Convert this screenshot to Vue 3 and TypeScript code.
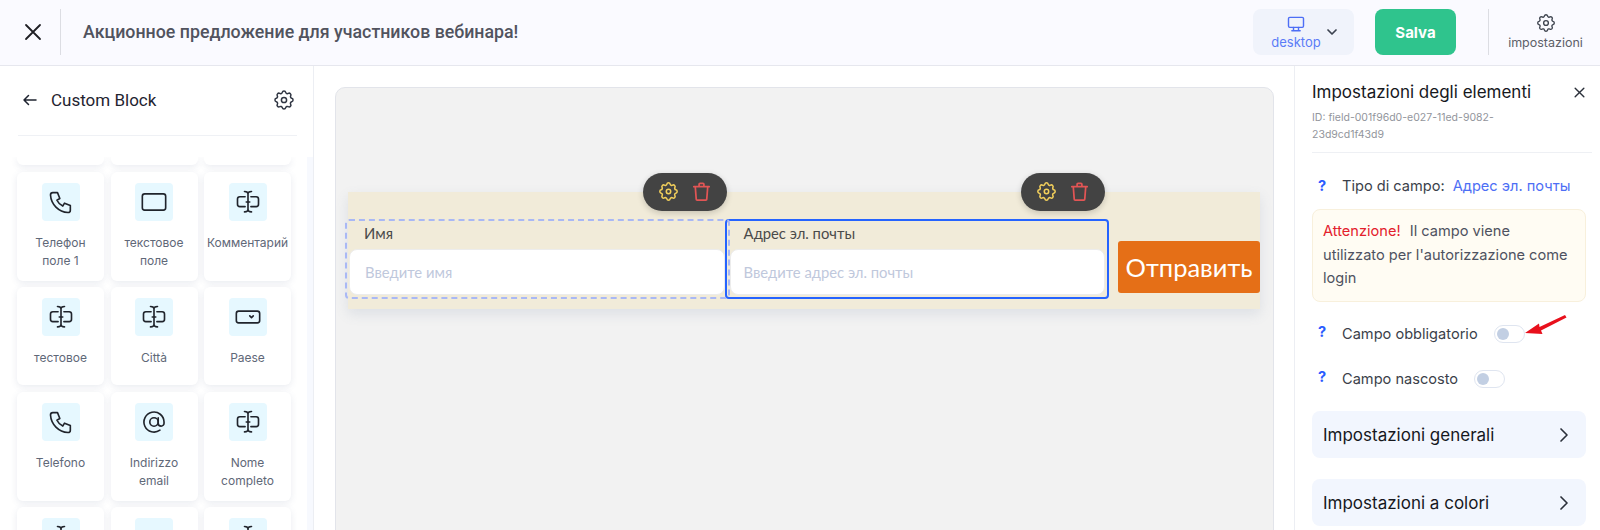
<script setup lang="ts">
type IconName = 'phone' | 'rect' | 'cursor' | 'select' | 'at' | 'none';

interface FieldCard {
  label: string;
  icon: IconName;
}

const stubs = [1, 2, 3];

const cards: FieldCard[] = [
  { label: 'Телефон поле 1', icon: 'phone' },
  { label: 'текстовое поле', icon: 'rect' },
  { label: 'Комментарий', icon: 'cursor' },
  { label: 'тестовое', icon: 'cursor' },
  { label: 'Città', icon: 'cursor' },
  { label: 'Paese', icon: 'select' },
  { label: 'Telefono', icon: 'phone' },
  { label: 'Indirizzo email', icon: 'at' },
  { label: 'Nome completo', icon: 'cursor' },
  { label: '', icon: 'cursor' },
  { label: '', icon: 'none' },
  { label: '', icon: 'cursor' },
];

const gearPath =
  'M10.3 4.3c.4-1.8 3-1.8 3.4 0a1.7 1.7 0 0 0 2.6 1.1c1.5-.9 3.3.8 2.4 2.4a1.7 1.7 0 0 0 1 2.5c1.8.4 1.8 3 0 3.4a1.7 1.7 0 0 0-1 2.6c.9 1.5-.9 3.3-2.4 2.4a1.7 1.7 0 0 0-2.6 1c-.4 1.8-3 1.8-3.4 0a1.7 1.7 0 0 0-2.6-1c-1.5.9-3.3-.9-2.4-2.4a1.7 1.7 0 0 0-1-2.6c-1.8-.4-1.8-3 0-3.4a1.7 1.7 0 0 0 1-2.5c-.9-1.6.9-3.3 2.4-2.4a1.7 1.7 0 0 0 2.6-1.1z';
const phonePath =
  'M5 4h4l2 5-2.5 1.5a11 11 0 0 0 5 5L15 13l5 2v4a2 2 0 0 1-2 2A16 16 0 0 1 3 6a2 2 0 0 1 2-2';
const trashPath = 'M4 7h16M5.500 7l1 13a1 1 0 0 0 1 1h9a1 1 0 0 0 1-1l1-13M9.500 7V4.500a1 1 0 0 1 1-1h3a1 1 0 0 1 1 1V7';
</script>

<template>
  <div class="page">
    <header class="topbar">
      <button class="close">
        <svg width="24" height="24" viewBox="0 0 24 24" fill="none" stroke="#1f1f24" stroke-width="1.8" stroke-linecap="round">
          <path d="M5 5l14 14M19 5L5 19" />
        </svg>
      </button>
      <h1 class="page-title">Акционное предложение для участников вебинара!</h1>
      <div class="device">
        <div class="device-main">
          <svg width="20" height="20" viewBox="0 0 24 24" fill="none" stroke="#4d6ef5" stroke-width="1.7" stroke-linecap="round" stroke-linejoin="round">
            <rect x="3" y="4" width="18" height="12" rx="1.5" />
            <path d="M7 20h10M9 16v4M15 16v4" />
          </svg>
          <span>desktop</span>
        </div>
        <svg class="device-chevron" width="16" height="16" viewBox="0 0 24 24" fill="none" stroke="#3c4350" stroke-width="2.6" stroke-linecap="round" stroke-linejoin="round">
          <path d="M6 9l6 6 6-6" />
        </svg>
      </div>
      <button class="save">Salva</button>
      <div class="settings">
        <svg width="22" height="22" viewBox="0 0 24 24" fill="none" stroke="#3f4550" stroke-width="1.5" stroke-linejoin="round">
          <path :d="gearPath" />
          <circle cx="12" cy="12" r="2.6" />
        </svg>
        <span>impostazioni</span>
      </div>
    </header>

    <div class="body">
      <aside class="left">
        <div class="left-head">
          <svg width="18" height="18" viewBox="0 0 24 24" fill="none" stroke="#1f2430" stroke-width="2" stroke-linecap="round" stroke-linejoin="round">
            <path d="M20 12H4M10 6l-6 6 6 6" />
          </svg>
          <span class="left-title">Custom Block</span>
          <svg class="left-gear" width="24" height="24" viewBox="0 0 24 24" fill="none" stroke="#2f3542" stroke-width="1.5" stroke-linejoin="round">
            <path :d="gearPath" />
            <circle cx="12" cy="12" r="2.6" />
          </svg>
        </div>
        <div class="list-wrap">
          <div class="list">
            <div v-for="s in stubs" :key="s" class="card stub"></div>
            <div v-for="(card, i) in cards" :key="i" class="card">
              <div class="tile">
                <svg v-if="card.icon !== 'none'" width="28" height="28" viewBox="0 0 24 24" fill="none" stroke="#20242c" stroke-width="1.4" stroke-linecap="round" stroke-linejoin="round">
                  <path v-if="card.icon === 'phone'" :d="phonePath" />
                  <rect v-else-if="card.icon === 'rect'" x="2" y="5" width="20" height="14" rx="2" />
                  <template v-else-if="card.icon === 'cursor'">
                    <path d="M9.500 7.500H5a2 2 0 0 0-2 2v4.500a2 2 0 0 0 2 2h4.500M14.500 7.500H19a2 2 0 0 1 2 2v4.500a2 2 0 0 1-2 2h-4.500" />
                    <path d="M12 5v13.500M9 3c1.500 0 3 .6 3 2 0-1.400 1.500-2 3-2M9 20.500c1.500 0 3-.6 3-2 0 1.400 1.500 2 3 2M10.500 12h3" />
                  </template>
                  <template v-else-if="card.icon === 'select'">
                    <rect x="2" y="7" width="20" height="10" rx="2" />
                    <path d="M13.500 11l1.500 1.500 1.500-1.500" />
                  </template>
                  <template v-else-if="card.icon === 'at'">
                    <circle cx="12" cy="12" r="3.600" />
                    <path d="M15.600 8.500v4.500a2.500 2.500 0 0 0 5 0V12a8.600 8.600 0 1 0-3.500 7" />
                  </template>
                </svg>
              </div>
              <div class="card-label">{{ card.label }}</div>
            </div>
          </div>
          <div class="scroll-track"></div>
        </div>
      </aside>

      <main class="center">
        <div class="canvas">
          <form class="form-block" @submit.prevent>
            <div class="field first">
              <div class="dashed"></div>
              <div class="pill">
                <svg width="23" height="23" viewBox="0 0 24 24" fill="none" stroke="#f2cf5b" stroke-width="1.6" stroke-linejoin="round">
                  <path :d="gearPath" />
                  <circle cx="12" cy="12" r="2.300" />
                </svg>
                <svg width="23" height="23" viewBox="0 0 24 24" fill="none" stroke="#e25555" stroke-width="1.8" stroke-linecap="round" stroke-linejoin="round">
                  <path :d="trashPath" />
                </svg>
              </div>
              <label>Имя</label>
              <div class="input">Введите имя</div>
            </div>
            <div class="field active">
              <div class="pill">
                <svg width="23" height="23" viewBox="0 0 24 24" fill="none" stroke="#f2cf5b" stroke-width="1.6" stroke-linejoin="round">
                  <path :d="gearPath" />
                  <circle cx="12" cy="12" r="2.300" />
                </svg>
                <svg width="23" height="23" viewBox="0 0 24 24" fill="none" stroke="#e25555" stroke-width="1.8" stroke-linecap="round" stroke-linejoin="round">
                  <path :d="trashPath" />
                </svg>
              </div>
              <label>Адрес эл. почты</label>
              <div class="input">Введите адрес эл. почты</div>
            </div>
            <button class="submit">Отправить</button>
          </form>
        </div>
      </main>

      <aside class="right">
        <div class="right-head">
          <div class="right-title">
            <span>Impostazioni degli elementi</span>
            <svg width="13" height="13" viewBox="0 0 24 24" fill="none" stroke="#2b303a" stroke-width="2.600" stroke-linecap="round">
              <path d="M4 4l16 16M20 4L4 20" />
            </svg>
          </div>
          <div class="right-id">ID: field-001f96d0-e027-11ed-9082-<br />23d9cd1f43d9</div>
        </div>
        <div class="row type-row">
          <span class="hint">?</span>
          <span class="row-label">Tipo di campo:</span>
          <span class="type-value">Адрес эл. почты</span>
        </div>
        <div class="warning">
          <span class="warn-word">Attenzione!</span> Il campo viene<br />utilizzato per l'autorizzazione come<br />login
        </div>
        <div class="row toggle-row required">
          <span class="hint">?</span>
          <span class="row-label">Campo obbligatorio</span>
          <span class="toggle"><i></i></span>
          <svg class="arrow" width="44" height="24" viewBox="0 0 44 24" fill="#e8101c">
            <path d="M1 19L15 9.500l.5 3.500L41 1l1.500 2.500L17 16.500l1.500 3.500z" />
          </svg>
        </div>
        <div class="row toggle-row hidden-row">
          <span class="hint">?</span>
          <span class="row-label">Campo nascosto</span>
          <span class="toggle"><i></i></span>
        </div>
        <div class="accordion">
          <span>Impostazioni generali</span>
          <svg width="18" height="18" viewBox="0 0 24 24" fill="none" stroke="#2b303a" stroke-width="2.200" stroke-linecap="round" stroke-linejoin="round">
            <path d="M8 4l8 8-8 8" />
          </svg>
        </div>
        <div class="accordion second">
          <span>Impostazioni a colori</span>
          <svg width="18" height="18" viewBox="0 0 24 24" fill="none" stroke="#2b303a" stroke-width="2.200" stroke-linecap="round" stroke-linejoin="round">
            <path d="M8 4l8 8-8 8" />
          </svg>
        </div>
      </aside>
    </div>
  </div>
</template>

<style>
html,
body {
  margin: 0;
  overflow: hidden;
  background: #fff;
}
</style>

<style scoped>
.page {
  width: 1600px;
  height: 530px;
  overflow: hidden;
  font-family: Inter, 'Noto Sans', sans-serif;
  display: flex;
  flex-direction: column;
}

.topbar {
  height: 65px;
  box-sizing: content-box;
  flex: none;
  background: #fafaff;
  border-bottom: 1px solid #e6e7ee;
  display: flex;
  align-items: flex-start;
}

.topbar > * {
  margin-top: 9px;
}

.close {
  width: 61px;
  height: 46px;
  padding: 0 0 0 6px;
  background: none;
  border: 0;
  border-right: 1px solid #dcdde3;
  display: flex;
  align-items: center;
  justify-content: center;
}

.topbar > .page-title {
  margin: 22px 0 0 22px;
  flex: 1;
  font: 500 17.800px/20px Roboto, sans-serif;
  color: #51535e;
}

.device {
  width: 101px;
  height: 46px;
  background: #f0f3fb;
  border-radius: 8px;
  display: flex;
  align-items: center;
  box-sizing: border-box;
  padding-left: 19px;
}

.device-main {
  width: 48px;
  display: flex;
  flex-direction: column;
  align-items: center;
  font-size: 13px;
  line-height: 16px;
  color: #5b7cf7;
}

.device-chevron {
  margin-left: 4px;
}

.save {
  width: 81px;
  height: 46px;
  margin-left: 21px;
  border: 0;
  border-radius: 8px;
  background: #2fc48d;
  color: #fff;
  font: 700 15px Inter, sans-serif;
}

.settings {
  width: 112px;
  height: 46px;
  margin-left: 32px;
  box-sizing: border-box;
  border-left: 1px solid #dcdde3;
  display: flex;
  flex-direction: column;
  align-items: center;
  justify-content: center;
  padding-left: 2px;
  font-size: 12.500px;
  line-height: 18px;
  color: #5d6068;
}

.body {
  flex: 1;
  min-height: 0;
  display: flex;
}

.left {
  width: 314px;
  flex: none;
  box-sizing: border-box;
  border-right: 1px solid #eceef3;
  display: flex;
  flex-direction: column;
}

.left-head {
  box-sizing: content-box;
  height: 67px;
  padding: 0 1px 2px 3px;
  margin: 0 16px 0 18px;
  flex: none;
  display: flex;
  align-items: center;
  gap: 12px;
  border-bottom: 1px solid #eff1f5;
}

.left-title {
  font: 400 17px Roboto, sans-serif;
  color: #1f2430;
}

.left-gear {
  margin-left: auto;
}

.list-wrap {
  flex: 1;
  min-height: 0;
  margin-top: 21px;
  display: flex;
  overflow: hidden;
}

.list {
  width: 274px;
  margin-left: 17px;
  align-self: flex-start;
  display: grid;
  grid-template-columns: repeat(3, 87px);
  column-gap: 6.500px;
  row-gap: 6.500px;
  align-content: start;
}

.card {
  background: #fff;
  border-radius: 6px;
  box-shadow: 0 2px 7px rgba(70, 90, 130, 0.12);
  padding: 11px 3px 0;
  min-height: 98px;
  box-sizing: border-box;
  display: flex;
  flex-direction: column;
  align-items: center;
  text-align: center;
}

.card.stub {
  height: 8px;
  min-height: 0;
  padding: 0;
  border-radius: 0 0 6px 6px;
}

.tile {
  width: 38px;
  height: 38px;
  flex: none;
  border-radius: 4px;
  background: #e6f8ff;
  display: flex;
  align-items: center;
  justify-content: center;
}

.card-label {
  margin-top: 13px;
  min-height: 18px;
  padding-bottom: 10px;
  font-size: 12px;
  line-height: 18.500px;
  color: #5f6878;
}

.scroll-track {
  width: 6px;
  margin-left: 16px;
  align-self: stretch;
  background: #f7f9fe;
}

.center {
  flex: 1;
  min-width: 0;
  padding: 21px 20px 0 21px;
}

.canvas {
  height: 600px;
  box-sizing: border-box;
  background: #f2f2f2;
  border: 1px solid #e2e4ea;
  border-radius: 10px;
  padding: 104px 12px 0;
}

.form-block {
  width: 912px;
  height: 117px;
  box-sizing: border-box;
  padding-top: 27px;
  background: #f1ebd9;
  box-shadow: 0 5px 12px rgba(90, 110, 150, 0.14);
  display: flex;
  align-items: flex-start;
  font-family: Lato, 'Noto Sans', sans-serif;
}

.field {
  position: relative;
  box-sizing: border-box;
  height: 80px;
}

.field.first {
  width: 380px;
  margin-left: -3px;
  padding: 5px 0 0 4px;
}

.field.active {
  width: 384px;
  padding: 3px 2.500px 0 2.500px;
  border: 2px solid #2563ff;
  border-radius: 4px;
}

.dashed {
  position: absolute;
  left: 0;
  top: 0;
  width: 385px;
  height: 80px;
  box-sizing: border-box;
  border: 2px dashed #a9b8f5;
  border-radius: 4px;
  z-index: 2;
  pointer-events: none;
}

.pill {
  position: absolute;
  right: -1.500px;
  top: -46.500px;
  width: 84px;
  height: 38px;
  box-sizing: border-box;
  padding: 0 14px;
  border-radius: 19px;
  background: #434343;
  box-shadow: 0 2px 6px rgba(0, 0, 0, 0.18);
  display: flex;
  align-items: center;
  justify-content: space-between;
  z-index: 3;
}

.field.active .pill {
  right: 2px;
  top: -48.500px;
}

.field label {
  display: block;
  padding-left: 15px;
  font-size: 14.800px;
  line-height: 18px;
  height: 25px;
  color: #4a4a4a;
}

.field.active label {
  padding-left: 14px;
}

.input {
  height: 46px;
  box-sizing: border-box;
  padding-left: 15px;
  border: 1px solid #ececec;
  border-radius: 8px;
  background: #fff;
  font-size: 14.800px;
  line-height: 44px;
  color: #bfc8dc;
}

.field.active .input {
  padding-left: 13px;
}

.submit {
  width: 142px;
  height: 52px;
  margin: 22px 0 0 9px;
  padding: 0;
  border: 0;
  border-radius: 3px;
  background: #e56f17;
  color: #fff;
  font: 400 25.500px Lato, 'Noto Sans', sans-serif;
}

.right {
  width: 306px;
  flex: none;
  box-sizing: border-box;
  border-left: 1px solid #eceef3;
  padding: 0 14px 0 17px;
  color: #3b3f4a;
  font-size: 14.600px;
}

.right-head {
  height: 87px;
  box-sizing: border-box;
  padding-top: 15px;
  margin-right: -6px;
  border-bottom: 1px solid #eef0f4;
}

.right-title {
  display: flex;
  align-items: center;
  justify-content: space-between;
  padding-right: 6px;
  font-size: 17px;
  line-height: 22px;
  color: #16181d;
}

.right-id {
  margin-top: 6px;
  font-size: 10.500px;
  line-height: 17px;
  color: #92959c;
}

.row {
  display: flex;
  align-items: center;
  position: relative;
}

.hint {
  width: 30px;
  padding-left: 6px;
  box-sizing: border-box;
  font-weight: 700;
  color: #2a5bff;
}

.type-row {
  margin-top: 23px;
  height: 20px;
}

.type-value {
  margin-left: 8px;
  color: #4d6ef5;
}

.warning {
  margin-top: 13px;
  height: 93px;
  box-sizing: border-box;
  padding: 10px 10px 0;
  border: 1px solid #f8f0dc;
  border-radius: 8px;
  background: #fffcf3;
  line-height: 23.500px;
  color: #4e5260;
  white-space: nowrap;
}

.warn-word {
  margin-right: 5px;
  color: #e3202c;
}

.toggle-row {
  height: 20px;
}

.toggle-row .hint {
  margin-bottom: 4px;
}

.required {
  margin-top: 22px;
}

.hidden-row {
  margin-top: 25px;
}

.toggle {
  width: 31px;
  height: 18px;
  box-sizing: border-box;
  margin-left: 16px;
  border: 1px solid #dfe5f0;
  border-radius: 9px;
  background: #fff;
  display: flex;
  align-items: center;
  padding-left: 2px;
}

.toggle i {
  width: 12px;
  height: 12px;
  border-radius: 50%;
  background: #c2cfe3;
}

.arrow {
  position: absolute;
  left: 212px;
  top: -10px;
}

.accordion {
  height: 47px;
  margin-top: 22px;
  box-sizing: border-box;
  padding: 0 13px 0 11px;
  border-radius: 8px;
  background: #f2f6fe;
  display: flex;
  align-items: center;
  justify-content: space-between;
  font-size: 17px;
  font-weight: 400;
  color: #16181d;
}

.accordion.second {
  margin-top: 21px;
}
</style>
